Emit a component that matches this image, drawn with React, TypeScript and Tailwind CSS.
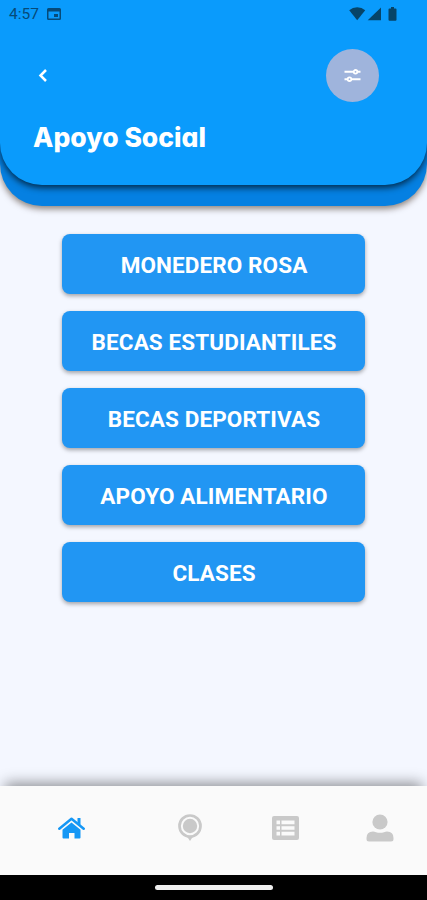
const OPTIONS = [
  'MONEDERO ROSA',
  'BECAS ESTUDIANTILES',
  'BECAS DEPORTIVAS',
  'APOYO ALIMENTARIO',
  'CLASES',
];

function StatusBar() {
  return (
    <div className="flex h-7 items-center justify-between pl-[9px] pr-[29px] text-[#064a78]">
      <div className="flex items-center gap-2">
        <span className="font-[Roboto,sans-serif] text-[15.5px] leading-7">4:57</span>
        <svg width="14" height="12" viewBox="0 0 14 12" fill="currentColor">
          <path
            fillRule="evenodd"
            d="M1.5 0h11A1.5 1.5 0 0 1 14 1.5v9a1.5 1.5 0 0 1-1.5 1.5h-11A1.5 1.5 0 0 1 0 10.5v-9A1.5 1.5 0 0 1 1.5 0zM1.5 3.6v6.9h11V3.6z"
          />
          <rect x="7" y="6" width="4" height="3" />
        </svg>
      </div>
      <svg width="49" height="14" viewBox="0 0 49 14" fill="#064468">
        <path d="M.2 3.3a12 12 0 0 1 16 0L8.2 13.2z" />
        <path d="M32 .4v12.8H18.7z" />
        <path d="M42 0h3v1.5h1.5q1 0 1 1v10.2q0 1-1 1h-6q-1 0-1-1V2.5q0-1 1-1H42z" />
      </svg>
    </div>
  );
}

function Header() {
  return (
    <header className="h-[206px] shrink-0 rounded-b-[42px] bg-[#0580e2] shadow-[0_3px_6px_rgba(40,20,0,0.5)]">
      <div className="h-[185px] rounded-b-[42px] bg-[#0a9bfc] shadow-[0_3px_6px_rgba(0,0,0,0.65)]">
        <StatusBar />
        <div className="mt-[21px] flex h-[53px] items-center justify-between pl-[38px] pr-[48px]">
          <button aria-label="Volver">
            <svg width="10" height="14" viewBox="0 0 10 14" fill="none" stroke="white" strokeWidth="2.5">
              <path d="M8 1L2.500 6.500L8 12" />
            </svg>
          </button>
          <button aria-label="Filtros" className="flex size-[53px] items-center justify-center rounded-full bg-[#9fb4dc]">
            <svg width="17" height="14" viewBox="0 0 17 14" fill="none" stroke="white" strokeWidth="2">
              <path d="M.5 2.8H9M14 2.8h2.5M.5 10.2H3M8 10.2h8.5" />
              <circle cx="11.5" cy="2.8" r="1.8" strokeWidth="1.8" />
              <circle cx="5.5" cy="10.2" r="1.8" strokeWidth="1.8" />
            </svg>
          </button>
        </div>
        <h1 className="mt-[16px] pl-[33px] font-[Inter,sans-serif] text-[26.5px] leading-[38px] font-extrabold text-white [font-feature-settings:'cv11']">
          Apoyo Social
        </h1>
      </div>
    </header>
  );
}

function BottomNav() {
  return (
    <nav className="flex h-[89px] shrink-0 items-center bg-[#fafafa] pb-[5px] pl-[58px] text-[#c9c9c9] shadow-[0_-8px_13px_-5px_rgba(0,0,0,0.42)]">
      <svg width="27" height="22" viewBox="0 0 27 22" fill="#1597f5">
        <path d="M1.300 11.700L13.500 1.700L25.700 11.700" fill="none" stroke="#1597f5" strokeWidth="2.500" strokeLinecap="round" strokeLinejoin="round" />
        <path d="M19.500 1h3v7l-3-2.500z" />
        <path d="M13.500 5.400L22.500 12.800V20.500q0 1-1 1H16.500V16h-5.500v5.500H5.500q-1 0-1-1V12.800z" />
      </svg>
      <svg className="ml-[93px]" width="24" height="28" viewBox="0 0 24 28" fill="currentColor">
        <circle cx="12" cy="12" r="10.5" fill="none" stroke="currentColor" strokeWidth="2.7" />
        <circle cx="12" cy="12" r="7.2" />
        <path d="M9 22.5h6l-3 4.5z" />
      </svg>
      <svg className="ml-[70px]" width="27" height="24" viewBox="0 0 27 24">
        <rect width="27" height="24" rx="2" fill="currentColor" />
        <path
          d="M4.500 6.300h3.500M4.500 12h3.500M4.500 17.700h3.500M9.500 6.300h13M9.500 12h13M9.500 17.700h13"
          stroke="#fafafa"
          strokeWidth="3.700"
        />
      </svg>
      <svg className="ml-[67px]" width="28" height="28" viewBox="0 0 28 28" fill="currentColor">
        <circle cx="14" cy="8" r="7.6" />
        <path d="M7 17.5q1.500 0 3 .7 4 1.300 8 0 1.500-.7 3-.7 6.500 0 6.500 6.500v1q0 2.500-2.500 2.500H3Q.5 27.500.5 25v-1q0-6.500 6.500-6.500z" />
      </svg>
    </nav>
  );
}

export default function App() {
  return (
    <div className="flex h-[900px] w-[427px] flex-col overflow-hidden bg-[#f4f7ff]">
      <Header />
      <main className="flex flex-1 flex-col items-center gap-[17px] pt-[28px]">
        {OPTIONS.map((label) => (
          <button
            key={label}
            className="h-[60px] w-[303px] rounded-[8px] bg-[#2196f3] pt-[3px] pl-px font-[Roboto,sans-serif] text-[22.5px] font-bold tracking-[0.1px] text-white shadow-[0_2px_4px_rgba(0,0,0,0.35)]"
          >
            {label}
          </button>
        ))}
      </main>
      <BottomNav />
      <div className="flex h-[25px] shrink-0 items-center justify-center bg-black">
        <div className="h-[5px] w-[118px] rounded-full bg-[#eee]" />
      </div>
    </div>
  );
}
